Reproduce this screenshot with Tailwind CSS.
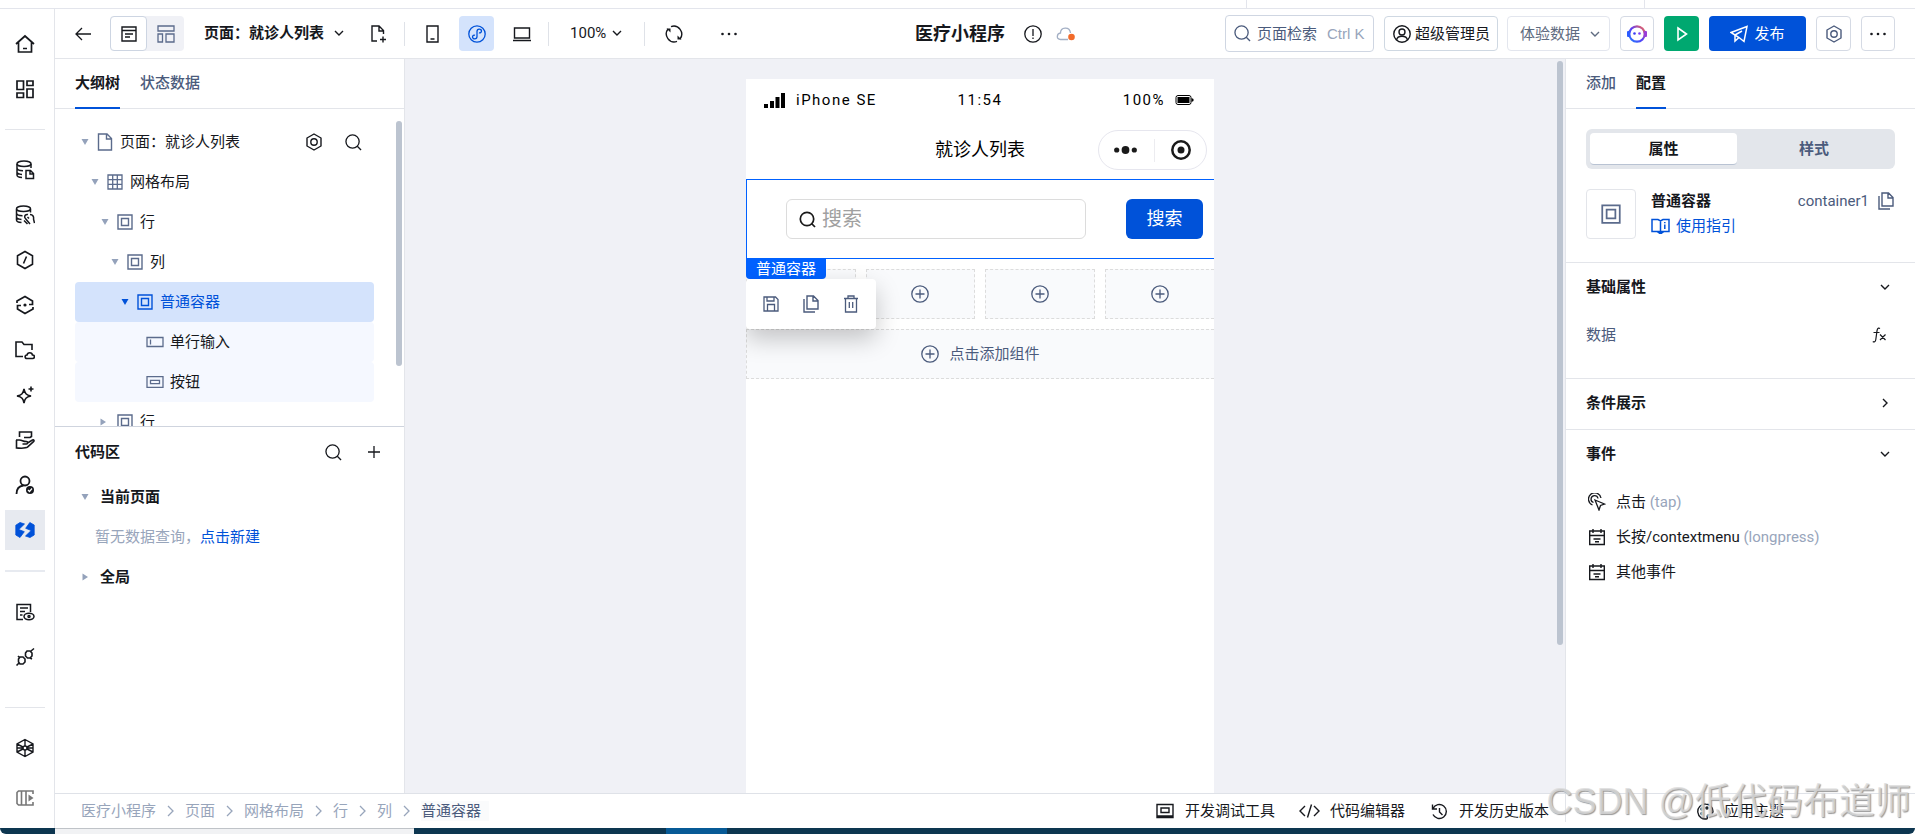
<!DOCTYPE html>
<html lang="zh-CN">
<head>
  <meta charset="UTF-8" />
  <meta name="viewport" content="width=device-width, initial-scale=1.0"/>
  <title>医疗小程序</title>
  <script src="https://cdn.jsdelivr.net/npm/@tailwindcss/browser@4"></script>
</head>
<body class="h-screen flex flex-col overflow-hidden bg-white text-[15px] leading-5 text-[#16181d] font-[Roboto,'Noto_Sans_CJK_SC',sans-serif]">

  <!-- Icon set -->
  <svg class="hidden">
    <symbol id="i-search" viewBox="0 0 18 18" fill="none" stroke="currentColor" stroke-width="1.4"><circle cx="8" cy="8" r="7"/><path d="M13 13l4 4"/></symbol>
    <symbol id="i-hex" viewBox="0 0 18 18" fill="none" stroke="currentColor" stroke-width="1.4"><path d="M9 1l7 4v8l-7 4-7-4V5z" stroke-linejoin="round"/><circle cx="9" cy="9" r="3.2"/></symbol>
    <symbol id="i-box" viewBox="0 0 16 16" fill="none" stroke="currentColor" stroke-width="1.4"><path d="M1 1h14v14H1zM4.500 4.500h7v7h-7z"/></symbol>
    <symbol id="i-down" viewBox="0 0 10 10" fill="none" stroke="currentColor" stroke-width="1.4"><path d="M1 3l4 4 4-4"/></symbol>
    <symbol id="i-right" viewBox="0 0 10 10" fill="none" stroke="currentColor" stroke-width="1.4"><path d="M3 1l4 4-4 4"/></symbol>
    <symbol id="i-sep" viewBox="0 0 9 12" fill="none" stroke="currentColor" stroke-width="1.3"><path d="M2 1l5 5-5 5"/></symbol>
    <symbol id="i-plus" viewBox="0 0 18 18" fill="none" stroke="currentColor" stroke-width="1.3"><circle cx="9" cy="9" r="8.2"/><path d="M9 4.500v9M4.500 9h9"/></symbol>
    <symbol id="i-copy" viewBox="0 0 18 18" fill="none" stroke="currentColor" stroke-width="1.4"><path d="M5 1h6.500L16 5.500V14H5zM11 1v5h5M2 4v13h11"/></symbol>
    <symbol id="i-event" viewBox="0 0 18 18" fill="none" stroke="currentColor" stroke-width="1.4"><path d="M1.700 3h14.600v13.500H1.700zM1.700 7.500h14.600M5 1v4M13 1v4M5.500 11h7M7 13.700h4"/></symbol>
    <symbol id="i-dots" viewBox="0 0 18 18" fill="currentColor"><circle cx="2.500" cy="9" r="1.300"/><circle cx="9" cy="9" r="1.300"/><circle cx="15.500" cy="9" r="1.300"/></symbol>
    <symbol id="i-tri" viewBox="0 0 8 8" fill="currentColor"><path d="M.5 1h7L4 7z"/></symbol>
    <symbol id="i-trir" viewBox="0 0 8 8" fill="currentColor"><path d="M1.500 .5v7L7 4z"/></symbol>
  </svg>

  <!-- Strip above the editor -->
  <div class="h-[9px] shrink-0 border-b border-[#e3e5ec] flex justify-end">
    <div class="w-[399px] border-x border-[#e3e5ec] mr-[270px]"></div>
  </div>

  <div class="flex-1 min-h-0 flex">
    <!-- Left icon rail -->
    <nav class="w-[55px] shrink-0 border-r border-[#e3e5ea] pt-[15px] pl-[5px] flex flex-col gap-[5px]">
      <button aria-label="首页" class="size-10 shrink-0 grid place-items-center"><svg class="size-5" viewBox="0 0 20 20" fill="none" stroke="currentColor" stroke-width="1.7"><path d="M1 10l9-8 9 8M3.500 8.500v9.500h13V8.500M8 14.500h4"/></svg></button>
      <button aria-label="应用" class="size-10 shrink-0 grid place-items-center"><svg class="size-5" viewBox="0 0 20 20" fill="none" stroke="currentColor" stroke-width="1.700"><path d="M2 2h6.500v8.500H2zM12 2h6v4.500h-6zM2 14h6.500v4.500H2zM12 10h6v8.500h-6z"/></svg></button>
      <hr class="w-10 my-[15px] border-[#e3e5ea]">
      <button aria-label="数据模型" class="size-10 shrink-0 grid place-items-center"><svg class="size-5" viewBox="0 0 20 20" fill="none" stroke="currentColor" stroke-width="1.500"><ellipse cx="9" cy="3.800" rx="7" ry="2.800"/><path d="M2 4v11c0 1.500 2 2.300 5 2.600M16 4v4M2 8c0 1.800 2.500 2.600 6 2.700M2 12c0 1.300 2 2.200 5 2.400M11 10.500h4.500l3 3v5H11zM15 10.500v3.500h3.500"/></svg></button>
      <button aria-label="数据源" class="size-10 shrink-0 grid place-items-center"><svg class="size-5" viewBox="0 0 20 20" fill="none" stroke="currentColor" stroke-width="1.500"><ellipse cx="8.500" cy="3.800" rx="7" ry="2.800"/><path d="M1.500 4v11c0 1.500 2 2.300 5 2.600M15.500 4v3.500M1.500 8c0 1.800 2.500 2.600 6 2.700M1.500 12c0 1.300 2 2.200 5 2.400M9 15.500l3.500 3.500M10 13c-1-2.500 1-4 3-3.500M10 13l5 6M12.500 12l1.500 1.500M15 9.500c3 0 4 2.500 3.500 4.500l1 4"/></svg></button>
      <button aria-label="变量" class="size-10 shrink-0 grid place-items-center"><svg class="size-5" viewBox="0 0 20 20" fill="none" stroke="currentColor" stroke-width="1.600"><path d="M10 1.500l7.500 4.300v8.400L10 18.500l-7.500-4.300V5.800zM11.500 6.500l-3 7"/></svg></button>
      <button aria-label="流程" class="size-10 shrink-0 grid place-items-center"><svg class="size-5" viewBox="0 0 20 20" fill="none" stroke="currentColor" stroke-width="1.700"><path d="M2 8V6l8-4.500L17.500 6v3.500H14M18 12v2l-8 4.500L2.500 14v-3.500H6"/><circle cx="10" cy="10" r="1.600" fill="currentColor" stroke="none"/></svg></button>
      <button aria-label="云存储" class="size-10 shrink-0 grid place-items-center"><svg class="size-5" viewBox="0 0 20 20" fill="none" stroke="currentColor" stroke-width="1.600"><path d="M8 16.500H1V2h6l2 2.500h8V10M12 18.500c-2.500 0-2.500-3.500 0-3.500 .5-3 5-3 5.500 0 2.500 0 2.500 3.500 0 3.500z"/></svg></button>
      <button aria-label="AI" class="size-10 shrink-0 grid place-items-center"><svg class="size-5" viewBox="0 0 20 20" fill="none" stroke="currentColor" stroke-width="1.600"><path d="M9 4c.8 4.500 2 6 7 7-5 1-6.200 2.500-7 7-.8-4.500-2-6-7-7 5-1 6.200-2.500 7-7zM16 1.500v5M13.500 4h5"/></svg></button>
      <button aria-label="服务" class="size-10 shrink-0 grid place-items-center"><svg class="size-5" viewBox="0 0 20 20" fill="none" stroke="currentColor" stroke-width="1.600"><path d="M4.500 7V2h12v4.500l-1.500 1H9M1 10h3.500c3 0 3 1.500 7 1.500 1.500 0 1.500 2.500 0 2.500H7.500M12.500 13l5-3c1.500-.5 2 .7 1 1.700l-6 5.500c-2 1.500-6.500 1-11 .8v-8"/></svg></button>
      <button aria-label="用户权限" class="size-10 shrink-0 grid place-items-center"><svg class="size-5" viewBox="0 0 20 20" fill="none" stroke="currentColor" stroke-width="1.800"><circle cx="10" cy="6" r="4.500"/><path d="M1.500 19c0-5 3-8 7-8.500"/><circle cx="15" cy="15" r="4" fill="currentColor" stroke="none"/><path d="M13 15l1.500 1.500 2.500-3" stroke="#fff" stroke-width="1.200"/></svg></button>
      <button aria-label="页面设计" class="size-10 shrink-0 grid place-items-center bg-[#e7eaf0] text-[#0052d9]"><svg class="size-5" viewBox="0 0 20 20" fill="currentColor" stroke="currentColor" stroke-width=".8" stroke-linejoin="round"><path d="M.8 5.200L5 2.500l4.500 1.500L3.800 9.500l5.500 2.200L5 17.500.8 15z"/><path d="M14.800 2.500L19.200 5v10L15 17.500 10.500 16l5.700-5.500-5.500-2.200z"/></svg></button>
      <hr class="w-10 my-[15px] border-t-2 border-[#e7eaf0]">
      <button aria-label="日志" class="size-10 shrink-0 grid place-items-center"><svg class="size-5" viewBox="0 0 20 20" fill="none" stroke="currentColor" stroke-width="1.500"><path d="M8 17.500H2v-15h13.500V10M5 6h8M5 9.500h5M5 13h2.500"/><ellipse cx="14" cy="14.500" rx="5" ry="3.200"/><circle cx="14" cy="14.500" r="1"/></svg></button>
      <button aria-label="连接器" class="size-10 shrink-0 grid place-items-center"><svg class="size-5" viewBox="0 0 20 20" fill="none" stroke="currentColor" stroke-width="1.600"><path d="M1.500 18.500l2.500-2.500M3.500 12l1.500-2h3l2 2v3l-2 2H5l-1.500-2zM10.500 6l1.500-2h3l2 2v3l-2 2h-2.500l-2-2zM16 4l3-2.500M3 9l2 2M15 11l2 1"/></svg></button>
      <hr class="w-10 mt-[25px] mb-[15px] border-[#e3e5ea]">
      <button aria-label="组件库" class="size-10 shrink-0 grid place-items-center"><svg class="size-5" viewBox="0 0 20 20" fill="none" stroke="currentColor" stroke-width="1.400"><path d="M10 1.500l8 4.300v8.400l-8 4.300-8-4.300V5.800zM10 1.500V8M10 12v6.500M2 6l6 3M12 11l6 3M18 6l-6 3M8 11l-6 3M2 10h6M12 10h6"/><circle cx="10" cy="10" r="2"/></svg></button>
      <button aria-label="展开" class="size-10 shrink-0 grid place-items-center mt-[5px] text-[#777]"><svg class="size-5" viewBox="0 0 20 20" fill="none" stroke="currentColor" stroke-width="1.600"><path d="M18 6V3H3.500L2 4.500v11L3.500 17H18v-3M6.500 3v14M11 3v14"/><path d="M13.500 6.500v7l5-3.500z" fill="currentColor" stroke="none"/></svg></button>
    </nav>

    <div class="flex-1 min-w-0 flex flex-col">
      <!-- Toolbar -->
      <header class="h-[50px] shrink-0 border-b border-[#e3e5ea] pl-5 pr-5 flex items-center">
        <button aria-label="返回"><svg class="w-4 h-4" viewBox="0 0 16 16" fill="none" stroke="currentColor" stroke-width="1.300"><path d="M16 8H1M7 2L1 8l6 6"/></svg></button>
        <div class="ml-[19px] flex bg-[#f0f1f6] rounded">
          <button aria-label="大纲视图" class="w-[37px] h-[35px] grid place-items-center bg-white border border-[#cdd5e2] rounded"><svg class="w-4 h-4" viewBox="0 0 16 16" fill="none" stroke="currentColor" stroke-width="1.400"><path d="M1 1h14v14H1zM1 4.500h14M4 8h8M4 11h5"/></svg></button>
          <button aria-label="布局视图" class="w-[37px] h-[35px] grid place-items-center text-[#5b6b8c]"><svg class="w-[18px] h-[18px]" viewBox="0 0 18 18" fill="none" stroke="currentColor" stroke-width="1.300"><path d="M1 1h16v5H1zM1 9h4.500v8H1zM9 9h8v8H9z"/></svg></button>
        </div>
        <button class="ml-5 mb-0.5 flex items-center font-bold">页面：就诊人列表<svg class="ml-2.5 size-2.5"><use href="#i-down"/></svg></button>
        <button aria-label="新建页面" class="ml-[27px]"><svg class="w-4 h-[18px]" viewBox="0 0 16 18" fill="none" stroke="currentColor" stroke-width="1.400"><path d="M6 16H1V1h7l4.500 4.500V9M8 1v5h4.500M12 11.500v6M9 14.500h6"/></svg></button>
        <div class="ml-[17px] h-6 w-px bg-[#dfe2e8]"></div>
        <button aria-label="手机" class="ml-[21px]"><svg class="w-[13px] h-[18px]" viewBox="0 0 13 18" fill="none" stroke="currentColor" stroke-width="1.400"><path d="M1 1h11v16H1zM4.500 14h4"/></svg></button>
        <button aria-label="小程序" class="ml-[20px] w-[35px] h-[35px] grid place-items-center rounded bg-[#d4e3fc] text-[#0052d9]"><svg class="size-[18px]" viewBox="0 0 18 18" fill="none" stroke="currentColor" stroke-width="1.300"><circle cx="9" cy="9" r="8.200"/><path d="M9 11.500c0 3-4.500 3-4.500 .5 0-1.500 1.500-2.200 2.500-1.700M9 11.500v-5c0-3 4.500-3 4.500-.5 0 1.500-1.500 2.200-2.500 1.700"/></svg></button>
        <button aria-label="电脑" class="ml-[19px]"><svg class="w-[18px] h-4" viewBox="0 0 18 16" fill="none" stroke="currentColor" stroke-width="1.400"><path d="M1.500 2h15v10h-15zM0 14.500h18"/></svg></button>
        <div class="ml-[17px] h-6 w-px bg-[#dfe2e8]"></div>
        <div class="ml-[21px] mb-0.5 relative flex items-center">
          <select aria-label="缩放" class="appearance-none w-[52px] bg-transparent"><option>100%</option></select>
          <svg class="absolute right-0 size-2.5 pointer-events-none"><use href="#i-down"/></svg>
        </div>
        <div class="ml-[22px] h-6 w-px bg-[#dfe2e8]"></div>
        <button aria-label="刷新" class="ml-[20px]"><svg class="size-[18px]" viewBox="0 0 18 18" fill="none" stroke="currentColor" stroke-width="1.400"><path d="M6 1.600A8 8 0 0 1 15 14M12 16.400A8 8 0 0 1 3 4"/><path d="M1.500 3.500h4v4zM16.500 14.500h-4v-4z" fill="currentColor" stroke="none"/></svg></button>
        <button aria-label="更多" class="ml-[37px]"><svg class="size-[18px]"><use href="#i-dots"/></svg></button>

        <h1 class="ml-[177px] text-lg font-bold">医疗小程序</h1>
        <button aria-label="提示" class="ml-[19px]"><svg class="size-[18px]" viewBox="0 0 18 18" fill="none" stroke="currentColor" stroke-width="1.300"><circle cx="9" cy="9" r="8.200"/><path d="M9 4v7M9 12.500v1.500"/></svg></button>
        <svg class="ml-3.5 w-5 h-[18px]" viewBox="0 0 20 18" fill="none" stroke="#a3afc4" stroke-width="1.300"><path d="M12 14.500H4.500c-4.500 0-4-6 0-6.500 0-6 9-7 10 0"/><circle cx="15.500" cy="12" r="3.300" fill="#f26b2a" stroke="none"/></svg>

        <button class="ml-auto h-[37px] w-[149px] px-2 flex items-center border border-[#cfd6e2] rounded text-[#4b5b7c] whitespace-nowrap"><svg class="size-[17px] shrink-0"><use href="#i-search"/></svg><span class="ml-[6px]">页面检索</span><span class="ml-2.5 text-[#98a5bb] font-['Liberation_Sans',sans-serif]">Ctrl K</span></button>
        <button class="ml-2.5 h-[35px] w-[114px] px-2 flex items-center gap-1 border border-[#cfd8e2] rounded whitespace-nowrap"><svg class="size-[18px] shrink-0" viewBox="0 0 18 18" fill="none" stroke="currentColor" stroke-width="1.400"><circle cx="9" cy="9" r="8.200"/><circle cx="9" cy="7" r="3"/><path d="M3.500 15c1-5 10-5 11 0"/></svg>超级管理员</button>
        <div class="ml-[9px] relative flex items-center text-[#5f6b80]">
          <select aria-label="数据环境" class="appearance-none h-[35px] w-[103px] pl-3 border border-[#e3e6ee] rounded"><option>体验数据</option></select>
          <svg class="absolute right-2.5 size-2.5 pointer-events-none"><use href="#i-down"/></svg>
        </div>
        <button aria-label="助手" class="ml-2.5 w-[34px] h-[35px] grid place-items-center border border-[#d5dae4] rounded">
          <svg class="size-5" viewBox="0 0 20 20" fill="none"><defs><linearGradient id="bot" x1="0" y1="1" x2="1" y2="0"><stop offset="0" stop-color="#1f7bff"/><stop offset=".5" stop-color="#5b3df5"/><stop offset="1" stop-color="#ff6a4d"/></linearGradient></defs><circle cx="10" cy="10" r="7.700" stroke="url(#bot)" stroke-width="2.200"/><rect x="0" y="7" width="3" height="6" rx="1" fill="#2c5cff"/><rect x="17" y="7" width="3" height="6" rx="1" fill="#9b3dd8"/><circle cx="7.500" cy="9.500" r="1.300" fill="#3b3df5"/><circle cx="12.500" cy="9.500" r="1.300" fill="#7a3df5"/></svg>
        </button>
        <button aria-label="预览" class="ml-2.5 w-[35px] h-[35px] grid place-items-center rounded bg-[#00a870] text-white"><svg class="w-3 h-4" viewBox="0 0 12 16" fill="none" stroke="currentColor" stroke-width="1.600"><path d="M2 2l8.500 6L2 14z"/></svg></button>
        <button class="ml-2.5 w-[97px] h-[35px] flex items-center justify-center gap-1.5 rounded bg-[#0052d9] text-white"><svg class="size-[18px]" viewBox="0 0 18 18" fill="none" stroke="currentColor" stroke-width="1.500"><path d="M1 7.500L17 1.500 14 16.500l-5-4zM9 12.500l-4 3.500V10l7-4"/></svg>发布</button>
        <button aria-label="设置" class="ml-2.5 w-[35px] h-[35px] grid place-items-center border border-[#d5dae4] rounded text-[#4b5b7c]"><svg class="size-[18px]"><use href="#i-hex"/></svg></button>
        <button aria-label="更多操作" class="ml-2.5 w-[34px] h-[35px] grid place-items-center border border-[#d5dae4] rounded"><svg class="size-[18px]"><use href="#i-dots"/></svg></button>
      </header>

      <div class="flex-1 min-h-0 flex">
        <!-- Outline and code panels -->
        <aside class="w-[350px] shrink-0 border-r border-[#e3e5ea] flex flex-col">
          <div class="h-[50px] shrink-0 border-b border-[#e3e5ea] pl-5 flex gap-5">
            <button class="h-[50px] border-b-2 border-[#0052d9] font-bold">大纲树</button>
            <button class="h-[50px] border-b-2 border-transparent text-[#4b5b7c] font-medium">状态数据</button>
          </div>
          <div class="h-[318px] shrink-0 border-b border-[#cfd4de] flex overflow-hidden">
            <div class="flex-1 pt-[13px] pl-5">
              <div class="h-10 pl-1.5 flex items-center"><svg class="size-2 text-[#94a2bb]"><use href="#i-tri"/></svg><svg class="ml-2 mr-[7px] w-4 h-[18px] text-[#5b6b8c]" viewBox="0 0 16 18" fill="none" stroke="currentColor" stroke-width="1.400"><path d="M1.500 1H10l4.500 4.500V17h-13zM9.500 1v5h5"/></svg>页面：就诊人列表
                <button aria-label="页面设置" class="ml-auto"><svg class="size-[18px]"><use href="#i-hex"/></svg></button>
                <button aria-label="搜索节点" class="ml-[22px] mr-3"><svg class="size-[17px]"><use href="#i-search"/></svg></button>
              </div>
              <div class="h-10 pl-4 flex items-center"><svg class="size-2 text-[#94a2bb]"><use href="#i-tri"/></svg><svg class="ml-2 mr-[7px] size-4 text-[#5b6b8c]" viewBox="0 0 16 16" fill="none" stroke="currentColor" stroke-width="1.300"><path d="M1 1h14v14H1zM1 5.700h14M1 10.300h14M5.700 1v14M10.300 1v14"/></svg>网格布局</div>
              <div class="h-10 pl-[26px] flex items-center"><svg class="size-2 text-[#94a2bb]"><use href="#i-tri"/></svg><svg class="ml-2 mr-[7px] size-4 text-[#5b6b8c]"><use href="#i-box"/></svg>行</div>
              <div class="h-10 pl-9 flex items-center"><svg class="size-2 text-[#94a2bb]"><use href="#i-tri"/></svg><svg class="ml-2 mr-[7px] size-4 text-[#5b6b8c]"><use href="#i-box"/></svg>列</div>
              <div class="w-[299px] h-10 pl-[46px] flex items-center rounded bg-[#d4e3fc] text-[#0052d9]"><svg class="size-2"><use href="#i-tri"/></svg><svg class="ml-2 mr-[7px] size-4"><use href="#i-box"/></svg>普通容器</div>
              <div class="w-[299px] h-10 pl-[71px] flex items-center rounded bg-[#f5f8ff]"><svg class="mr-1.5 w-[18px] h-3 text-[#5b6b8c]" viewBox="0 0 18 12" fill="none" stroke="currentColor" stroke-width="1.300"><path d="M1 1.500h16v9H1zM4.500 3.500v5"/></svg>单行输入</div>
              <div class="w-[299px] h-10 pl-[71px] flex items-center rounded bg-[#f5f8ff]"><svg class="mr-1.5 w-[18px] h-3" viewBox="0 0 18 12" fill="none" stroke="#5b6b8c" stroke-width="1.300"><path d="M1 .7h16v10.600H1zM4.500 4.300h9v3.400h-9z"/></svg>按钮</div>
              <div class="h-10 pl-6 flex items-center"><svg class="size-2 text-[#94a2bb]"><use href="#i-trir"/></svg><svg class="ml-2.5 mr-[7px] size-4 text-[#5b6b8c]"><use href="#i-box"/></svg>行</div>
            </div>
            <div class="w-1.5 h-[245px] mt-3 ml-[22px] mr-0.5 rounded-full bg-[#bcc4d0]"></div>
          </div>
          <div class="pl-5 pr-6">
            <div class="h-[50px] flex items-center">
              <h2 class="font-bold">代码区</h2>
              <button aria-label="搜索代码" class="ml-auto"><svg class="size-[17px]"><use href="#i-search"/></svg></button>
              <button aria-label="新建代码" class="ml-[26px]"><svg class="size-3" viewBox="0 0 12 12" stroke="currentColor" stroke-width="1.300"><path d="M6 0v12M0 6h12"/></svg></button>
            </div>
            <div class="h-10 pl-1.5 flex items-center font-bold"><svg class="mr-[11px] size-2 text-[#94a2bb]"><use href="#i-tri"/></svg>当前页面</div>
            <div class="h-10 pl-5 flex items-center text-[#98a5bb]">暂无数据查询，<a href="#" class="text-[#0052d9]">点击新建</a></div>
            <div class="h-10 pl-1.5 flex items-center font-bold"><svg class="mr-[11px] size-2 text-[#94a2bb]"><use href="#i-trir"/></svg>全局</div>
          </div>
        </aside>

        <!-- Canvas -->
        <main class="flex-1 min-w-0 bg-[#f0f1f6] relative flex justify-center">
          <div class="absolute right-0.5 top-0.5 w-1.5 h-[584px] rounded-full bg-[#bcc4d0]"></div>
          <div class="w-[468px] mt-5 mr-2.5 bg-white text-black overflow-hidden">
            <div class="h-[42px] px-[18px] grid grid-cols-3 items-center tracking-widest">
              <span class="flex items-center"><svg class="mr-2.5 w-[22px] h-4" viewBox="0 0 22 16"><path d="M0 12h4v4H0zM6 9h4v7H6zM11.500 5h4v11h-4zM17 1h4v15h-4z"/></svg>iPhone SE</span>
              <span class="text-center">11:54</span>
              <span class="flex items-center justify-end">100%<svg class="ml-2.5 w-[21px] h-3" viewBox="0 0 21 12"><rect x="1" y="1.500" width="15" height="9" rx="2" fill="none" stroke="#000"/><rect x="2.500" y="3" width="12" height="6"/><path d="M16.500 4l2 1v2l-2 1z"/></svg></span>
            </div>
            <div class="h-[58px] relative flex items-center justify-center text-lg">
              就诊人列表
              <div class="absolute right-[7px] top-[9px] w-[109px] h-10 px-[15px] flex items-center justify-between border border-[#e6e6ee] rounded-full">
                <svg class="w-[23px] h-2" viewBox="0 0 23 8" fill="#1a1a1a"><circle cx="2.700" cy="4" r="2.600"/><circle cx="11.500" cy="4" r="3.900"/><circle cx="20.300" cy="4" r="2.600"/></svg>
                <div class="w-px h-[23px] bg-[#ececf0]"></div>
                <svg class="size-5" viewBox="0 0 20 20"><circle cx="10" cy="10" r="8.700" fill="none" stroke="#1a1a1a" stroke-width="2.500"/><circle cx="10" cy="10" r="3.500" fill="#1a1a1a"/></svg>
              </div>
            </div>
            <div class="relative h-20 border border-r-0 border-[#0061ff] pl-[39px] pr-[11px] flex items-center justify-between">
              <label class="w-[300px] h-10 px-3 flex items-center gap-1.5 border border-[#dcdcdc] rounded-md">
                <svg class="size-[17px] shrink-0" viewBox="0 0 17 17" fill="none" stroke="#1a1a1a" stroke-width="1.700"><circle cx="8" cy="8" r="6.700"/><path d="M12.500 12.500l3.500 3.500"/></svg>
                <input type="text" aria-label="搜索" placeholder="搜索" class="w-full outline-none text-xl leading-6 placeholder:text-[#a0a0a0]">
              </label>
              <button class="w-[77px] h-10 rounded-md bg-[#0052d9] text-white text-lg">搜索</button>
              <!-- selection label and actions -->
              <div class="absolute z-10 left-[-1px] top-[79px]">
                <div class="w-20 h-5 bg-[#0061ff] text-white text-center rounded-b">普通容器</div>
                <div class="w-[130px] h-[50px] px-[17px] flex items-center justify-between bg-white rounded text-[#4b5b7c] shadow-[0_10px_24px_rgba(0,0,0,0.22)]">
                  <button aria-label="保存"><svg class="size-4" viewBox="0 0 16 16" fill="none" stroke="currentColor" stroke-width="1.300"><path d="M1 1h11.500L15 3.500V15H1zM4 1v4h7V1M4.500 15V8.500h7V15"/></svg></button>
                  <button aria-label="复制"><svg class="size-[18px]"><use href="#i-copy"/></svg></button>
                  <button aria-label="删除"><svg class="w-4 h-[18px]" viewBox="0 0 16 18" fill="none" stroke="currentColor" stroke-width="1.300"><path d="M1 3.500h14M5 3.500V1h6v2.500M2.500 3.500V17h11V3.500M6.300 7v6M9.700 7v6"/></svg></button>
                </div>
              </div>
            </div>
            <div class="h-[50px] my-2.5 grid grid-cols-4 gap-2.5 text-[#4b5b7c]">
              <button aria-label="添加到第1列" class="grid place-items-center border border-dashed border-[#dcdcdc] bg-[#f9fafc]"></button>
              <button aria-label="添加到第2列" class="grid place-items-center border border-dashed border-[#dcdcdc] bg-[#f9fafc]"><svg class="size-[18px]"><use href="#i-plus"/></svg></button>
              <button aria-label="添加到第3列" class="grid place-items-center border border-dashed border-[#dcdcdc] bg-[#f9fafc]"><svg class="size-[18px]"><use href="#i-plus"/></svg></button>
              <button aria-label="添加到第4列" class="grid place-items-center border border-r-0 border-dashed border-[#dcdcdc] bg-[#f9fafc]"><svg class="size-[18px]"><use href="#i-plus"/></svg></button>
            </div>
            <button class="w-full h-[50px] flex items-center justify-center gap-2.5 border border-r-0 border-dashed border-[#dcdcdc] bg-[#f9fafc] text-[#4b5b7c]"><svg class="size-[18px]"><use href="#i-plus"/></svg>点击添加组件</button>
          </div>
        </main>

        <!-- Properties -->
        <aside class="w-[350px] shrink-0 border-l border-[#e3e5ea]">
          <div class="h-[50px] border-b border-[#e3e5ea] pl-5 flex gap-5">
            <button class="h-[50px] border-b-2 border-transparent text-[#4b5b7c] font-medium">添加</button>
            <button class="h-[50px] border-b-2 border-[#0052d9] font-bold">配置</button>
          </div>
          <div class="h-[154px] px-5 pt-5 border-b border-[#e3e5ea]">
            <div class="h-10 p-1 grid grid-cols-[147px_1fr] bg-[#e3e6eb] rounded-md font-bold">
              <button class="bg-white rounded-sm border-b border-[#b9c3d3]">属性</button>
              <button class="text-[#4b5b7c]">样式</button>
            </div>
            <div class="mt-5 flex">
              <div class="size-[50px] grid place-items-center border border-[#e3e5ea] rounded text-[#5b6b8c]"><svg class="size-5"><use href="#i-box"/></svg></div>
              <div class="ml-[15px] flex-1">
                <div class="h-6 flex items-center"><span class="font-bold">普通容器</span><span class="ml-auto text-[#4b5b7c]">container1</span><button aria-label="复制名称" class="ml-2 text-[#4b5b7c]"><svg class="size-[18px]"><use href="#i-copy"/></svg></button></div>
                <a href="#" class="h-[25px] flex items-center gap-1.5 text-[#0052d9]"><svg class="w-[19px] h-4" viewBox="0 0 19 16" fill="none" stroke="currentColor" stroke-width="1.500"><path d="M1 1.500h6l2.500 1.500L12 1.500h6v12H1zM9.500 3v10.500M13.800 6.500v4.500M13.800 4v1.200"/><path d="M7 14h5l-2.500 2z" fill="currentColor"/></svg>使用指引</a>
              </div>
            </div>
          </div>
          <div class="h-[116px] px-5 border-b border-[#e3e5ea]">
            <button class="w-full h-12 pr-[5px] flex items-center justify-between font-bold">基础属性<svg class="size-2.5"><use href="#i-down"/></svg></button>
            <div class="h-12 pr-2 flex items-center justify-between text-[#4b5b7c]">数据<button aria-label="表达式" class="text-[#16181d]"><svg class="w-[15px] h-4" viewBox="0 0 15 16" fill="none" stroke="currentColor" stroke-width="1.200"><path d="M8 1.500C5.500 0 5 3 4.700 6l-.9 6.500C3.500 15 2 15.300 .8 14.500M1.500 5.500h6M8 7.500l5.500 5.500M13.500 7.500L8 13"/></svg></button></div>
          </div>
          <div class="h-[51px] px-5 border-b border-[#e3e5ea]">
            <button class="w-full h-12 pr-[5px] flex items-center justify-between font-bold">条件展示<svg class="size-2.5"><use href="#i-right"/></svg></button>
          </div>
          <div class="px-5">
            <button class="w-full h-12 pr-[5px] flex items-center justify-between font-bold">事件<svg class="size-2.5"><use href="#i-down"/></svg></button>
            <ul class="pt-1.5">
              <li class="h-[35px] flex items-center"><svg class="ml-0.5 mr-2.5 size-[18px]" viewBox="0 0 18 18" fill="none" stroke="currentColor" stroke-width="1.300"><path d="M4.500 12A6.300 6.300 0 1 1 13 5M5.500 9.500A3.500 3.500 0 1 1 10 5.500M7 7l9.500 4-4 1.500L11 17z"/></svg>点击&nbsp;<span class="text-[#98a5bb]">(tap)</span></li>
              <li class="h-[35px] flex items-center"><svg class="ml-0.5 mr-2.5 size-[18px]"><use href="#i-event"/></svg>长按/contextmenu&nbsp;<span class="text-[#98a5bb]">(longpress)</span></li>
              <li class="h-[35px] flex items-center"><svg class="ml-0.5 mr-2.5 size-[18px]"><use href="#i-event"/></svg>其他事件</li>
            </ul>
          </div>
        </aside>
      </div>

      <!-- Status bar -->
      <footer class="relative h-[35px] shrink-0 border-t border-[#dfe2e8] flex items-center">
        <nav class="pl-[26px] flex items-center gap-2.5 text-[#98a5bb]">
          <a href="#">医疗小程序</a><svg class="w-[9px] h-3"><use href="#i-sep"/></svg>
          <a href="#">页面</a><svg class="w-[9px] h-3"><use href="#i-sep"/></svg>
          <a href="#">网格布局</a><svg class="w-[9px] h-3"><use href="#i-sep"/></svg>
          <a href="#">行</a><svg class="w-[9px] h-3"><use href="#i-sep"/></svg>
          <a href="#">列</a><svg class="w-[9px] h-3"><use href="#i-sep"/></svg>
          <a href="#" class="pr-2 bg-[#fafbfc] text-[#4b5b7c]">普通容器</a>
        </nav>
        <button class="ml-auto flex items-center gap-[11px]"><svg class="w-[18px] h-4" viewBox="0 0 18 16" fill="none" stroke="currentColor" stroke-width="1.400"><path d="M1 1.500h16v13H1zM1 13h16M5 5h8v4.500H5z"/></svg>开发调试工具</button>
        <button class="ml-6 flex items-center gap-2.5"><svg class="w-[21px] h-4" viewBox="0 0 21 16" fill="none" stroke="currentColor" stroke-width="1.400"><path d="M6 3L1 8l5 5M15 3l5 5-5 5M12.500 1.500l-4 13"/></svg>代码编辑器</button>
        <button class="ml-[26px] mr-4 flex items-center gap-[11px]"><svg class="size-[17px]" viewBox="0 0 17 17" fill="none" stroke="currentColor" stroke-width="1.400"><path d="M2 5.500A7 7 0 1 1 2 11.500M1.500 1.500v4.500H6M8.500 5v4l3 3"/></svg>开发历史版本</button>
        <div class="w-[350px] h-full pb-1.5">
          <div class="h-full border-l border-[#e3e5ea] pt-1.5 flex items-center justify-center">
            <button class="flex items-center gap-2.5"><svg class="size-[17px]" viewBox="0 0 17 17" fill="none" stroke="currentColor" stroke-width="1.400"><path d="M8.500 1a7.500 7.500 0 1 0 1.500 14.800c1-.5-.5-2 .5-3.300s5 .5 5.500-4C16 4 12.500 1 8.500 1z"/><circle cx="5" cy="6" r="1"/><circle cx="10" cy="5" r="1"/><circle cx="5" cy="10.500" r="1"/></svg>应用主题</button>
          </div>
        </div>
        <span class="absolute right-1 top-[-14px] text-4xl leading-[44px] whitespace-nowrap pointer-events-none text-[#dcdcdc]/80 [text-shadow:1px_1px_1px_#999] font-['Liberation_Sans','Noto_Sans_CJK_SC',sans-serif]">CSDN @低代码布道师</span>
      </footer>
    </div>
  </div>

  <!-- Desktop edge below the window -->
  <div class="h-1.5 shrink-0 flex bg-[#0d3650] rounded-b-lg">
    <div class="ml-[55px] w-[359px] bg-[#f1f2f4] border-t border-[#bfc3c8]"></div>
    <div class="ml-[252px] w-[61px] bg-[#075a96]"></div>
  </div>
</body>
</html>
